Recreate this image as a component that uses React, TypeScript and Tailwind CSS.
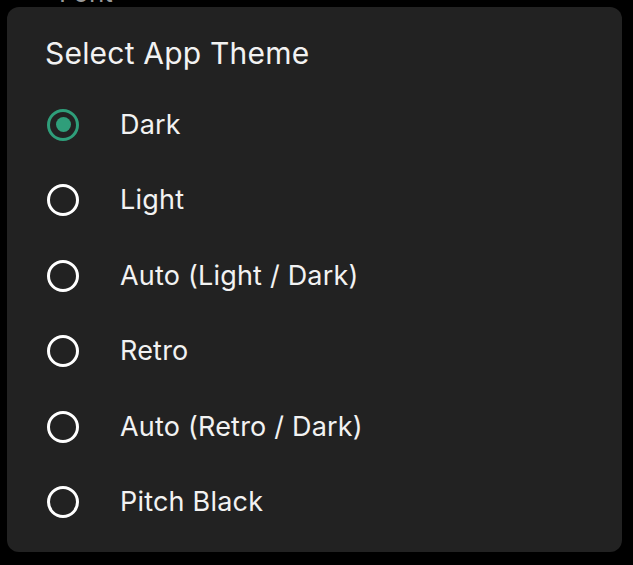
const themes = [
  "Dark",
  "Light",
  "Auto (Light / Dark)",
  "Retro",
  "Auto (Retro / Dark)",
  "Pitch Black",
];

const Radio = ({ checked }: { checked: boolean }) =>
  checked ? (
    <div className="w-[32px] h-[32px] rounded-full border-[3px] border-[#2f9e7a] flex items-center justify-center shrink-0">
      <div className="w-[15px] h-[15px] rounded-full bg-[#2f9e7a]" />
    </div>
  ) : (
    <div className="w-[32px] h-[32px] rounded-full border-[3px] border-white shrink-0" />
  );

export default function App() {
  return (
    <div
      className="w-[633px] h-[565px] bg-black overflow-hidden relative"
      style={{ fontFamily: "Inter, 'Noto Sans', sans-serif" }}
    >
      {/* what is left of the setting behind the dialog */}
      <div className="h-[7px] overflow-hidden">
        <div className="ml-[59px] -mt-[22px] text-[26px] leading-[30px] text-[#9a9a9a]">
          Font
        </div>
      </div>

      <div className="ml-[7px] w-[615px] h-[545px] bg-[#222222] rounded-[12px] pt-[28px]">
        <div className="pl-[38px] text-[30px] leading-[36px] tracking-[0.2px] text-[#f2f2f2]">
          Select App Theme
        </div>
        <div className="mt-[16px] flex flex-col">
          {themes.map((t, i) => (
            <div key={t} className="h-[75.5px] flex items-center pl-[40px] gap-[41px]">
              <Radio checked={i === 0} />
              <span className="text-[27px] leading-[32px] tracking-[0.2px] text-[#f2f2f2]">{t}</span>
            </div>
          ))}
        </div>
      </div>
    </div>
  );
}
